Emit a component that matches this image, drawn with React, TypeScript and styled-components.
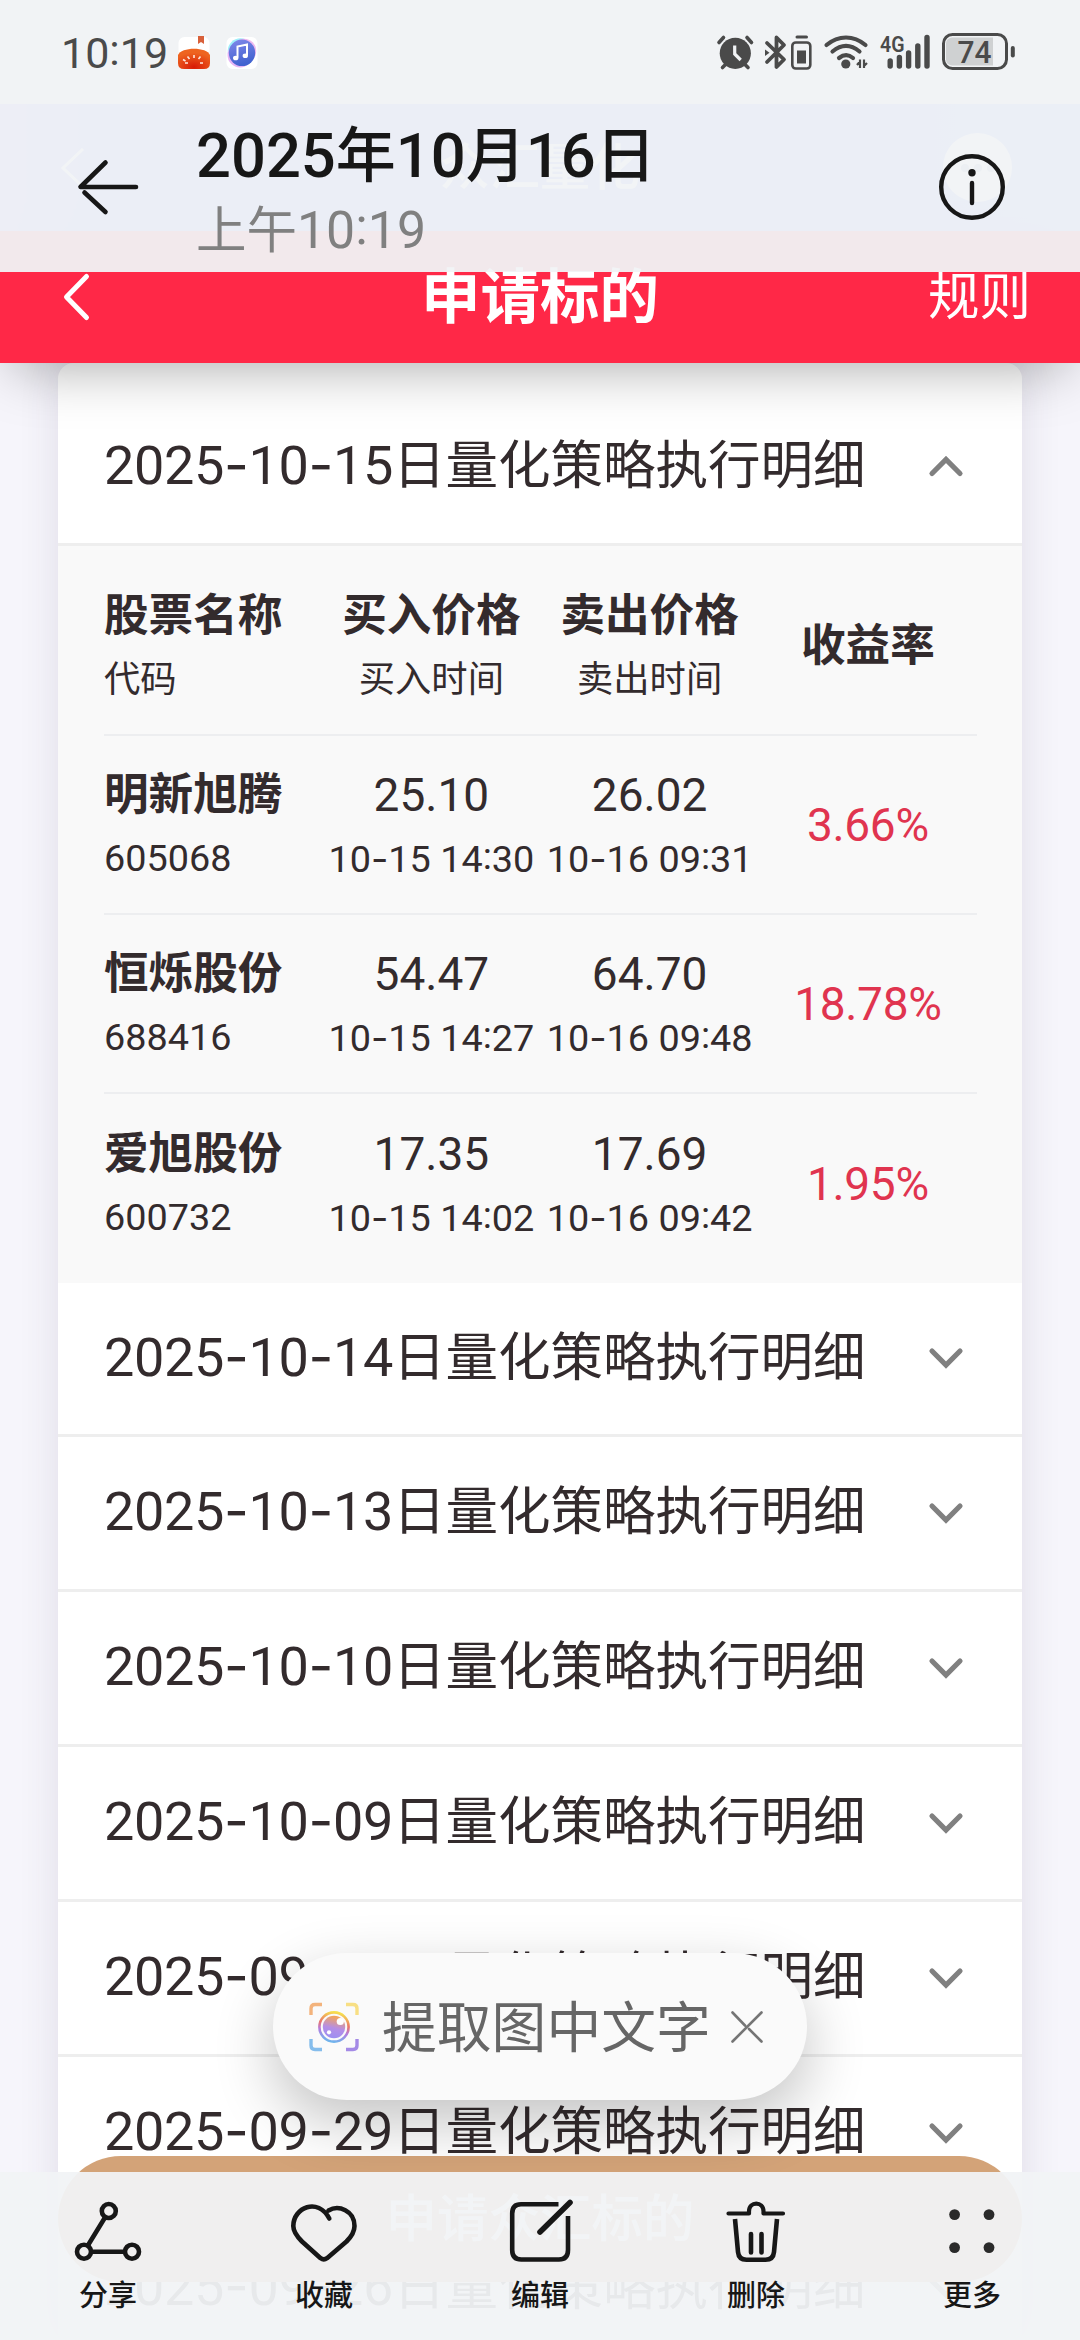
import React from "react";
import styled, { createGlobalStyle } from "styled-components";

const GlobalStyle = createGlobalStyle`
  * { box-sizing: border-box; }
  html, body { margin: 0; padding: 0; }
  body { font-family: Roboto, "Noto Sans CJK SC", sans-serif; background: #f6f5fb; }
  svg { display: block; flex: none; overflow: visible; }
`;

const Screen = styled.div`
  position: relative;
  width: 1080px;
  height: 2340px;
  overflow: hidden;
  background: #f6f5fb;
  color: #332b2d;
`;

/* ---------- text helpers ---------- */

const Digits = styled.span<{ $size: number; $gap?: number }>`
  font-family: Roboto, sans-serif;
  font-size: ${(p) => p.$size}px;
  letter-spacing: ${(p) => p.$gap ?? 0}px;
`;
const Hyphen = styled.span`
  font-family: Inter, sans-serif;
`;
const Colon = styled.span`
  position: relative;
  top: -0.08em;
`;

function Num({ text, size, gap }: { text: string; size: number; gap?: number }) {
  return (
    <Digits $size={size} $gap={gap}>
      {text.split(/([-:])/).map((part, i) =>
        part === "-" ? <Hyphen key={i}>-</Hyphen> : part === ":" ? <Colon key={i}>:</Colon> : part
      )}
    </Digits>
  );
}

/* ---------- captured page ---------- */

const WebView = styled.div`
  display: flex;
  flex-direction: column;
  padding-top: 104px;
  isolation: isolate;
`;
const WebTitleBar = styled.div`
  flex: none;
  height: 127px;
  display: grid;
  grid-template-columns: 200px 1fr 200px;
  align-items: center;
  padding: 0 68px 0 62px;
  background: linear-gradient(90deg, #9c84ff 0, #788fff 100px, #788fff 860px, #7c98ff 100%);
  color: #fff;
`;
const WebTitle = styled.div`
  font-size: 50px;
  line-height: 60px;
  font-weight: 500;
  text-align: center;
  padding-left: 6px;
`;
const MoreBubble = styled.div`
  justify-self: end;
  width: 69px;
  height: 69px;
  border-radius: 50%;
  background: #fff;
  display: flex;
  gap: 5px;
  align-items: center;
  justify-content: center;
`;
const BubbleDot = styled.i`
  width: 8px;
  height: 8px;
  border-radius: 50%;
  background: #8898b8;
`;

const AppHeader = styled.header`
  position: relative;
  z-index: 1;
  flex: none;
  height: 131.5px;
  padding: 0 49px 0 64px;
  display: grid;
  grid-template-columns: 150px 1fr 150px;
  align-items: center;
  background: #ff2847;
  color: #fff;
  box-shadow: 0 18px 56px -14px rgba(0, 0, 0, 0.34);
`;
const AppTitle = styled.h1`
  margin: 2px 0 0;
  font-size: 59.5px;
  line-height: 70px;
  font-weight: 700;
  text-align: center;
  padding-right: 15px;
`;
const RuleLink = styled.a`
  justify-self: end;
  margin-top: 2px;
  font-size: 51.5px;
  line-height: 62px;
`;

const Card = styled.main`
  height: 1977.5px;
  overflow: hidden;
  border-radius: 16px 16px 0 0;
  background: #fff;
`;
const CardShade = styled.div`
  margin: 0 58px;
  border-radius: 16px 16px 0 0;
  box-shadow: 0 0 40px rgba(60, 50, 90, 0.12);
`;
const AccordionRow = styled.div<{ $height: number; $top?: number }>`
  height: ${(p) => p.$height}px;
  padding: ${(p) => p.$top ?? 0}px 59px 0 46px;
  display: flex;
  align-items: center;
  justify-content: space-between;
  border-bottom: 3px solid #eeeeee;
`;
const RowTitle = styled.div`
  margin-bottom: 3px;
  font-size: 52.5px;
  line-height: 64px;
  white-space: nowrap;
`;
const DetailPanel = styled.section`
  height: 737px;
  padding: 11px 45px 0 46px;
  background: #f9f9f9;
`;
const TableRow = styled.div`
  height: 179px;
  display: grid;
  grid-template-columns: repeat(4, 1fr);
  align-items: center;
  border-bottom: 2px solid #edeef0;
  &:last-child { border-bottom: 0; }
`;
const Cell = styled.div<{ $align?: string }>`
  display: flex;
  flex-direction: column;
  align-items: ${(p) => p.$align ?? "center"};
  white-space: nowrap;
`;
const PairCell = styled(Cell)`
  padding-top: 4px;
`;
const Primary = styled.div<{ $bold?: boolean; $color?: string }>`
  height: 64px;
  line-height: 64px;
  font-size: 44.6px;
  font-weight: ${(p) => (p.$bold ? 700 : 400)};
  color: ${(p) => p.$color ?? "inherit"};
`;
const Secondary = styled.div`
  height: 63px;
  line-height: 63px;
  font-size: 36.3px;
`;

/* ---------- overlays ---------- */

const ApplyButton = styled.button`
  position: absolute;
  left: 58px;
  top: 2156px;
  width: 964px;
  height: 126px;
  padding: 0 0 8px;
  border: 0;
  border-radius: 63px;
  background: #d3a378;
  color: #fff;
  font: 500 51.5px/60px "Noto Sans CJK SC", sans-serif;
`;
const StatusBar = styled.div`
  position: absolute;
  inset: 0 0 auto 0;
  height: 104px;
  padding: 0 63px 0 61px;
  display: flex;
  align-items: center;
  background: #f1f3f5;
  color: #4a4a4a;
`;
const Clock = styled.div`
  width: 117px;
  line-height: 50px;
  padding-top: 12px;
  margin-bottom: 0;
`;
const StatusIcons = styled.div`
  margin-left: auto;
`;
const AppIcons = styled.div`
  display: flex;
  gap: 16px;
`;
const GalleryHeader = styled.div`
  position: absolute;
  inset: 104px 0 auto 0;
  height: 168px;
  padding: 0 74px 0 78px;
  display: flex;
  background: rgba(241, 243, 245, 0.95);
`;
const BackSlot = styled.div`
  width: 118px;
  padding-top: 55px;
`;
const DateBlock = styled.div`
  flex: 1;
  white-space: nowrap;
`;
const DateLine = styled.div`
  height: 66px;
  margin-top: 19px;
  line-height: 66px;
  font-size: 60px;
  font-weight: 500;
  color: #171717;
`;
const TimeLine = styled.div`
  height: 60px;
  margin-top: 12px;
  line-height: 60px;
  font-size: 50.5px;
  color: #808080;
`;
const InfoSlot = styled.div`
  padding-top: 49px;
`;
const ExtractPill = styled.div`
  position: absolute;
  left: 273px;
  top: 1953px;
  width: 534px;
  height: 147px;
  padding: 0 44px 0 36px;
  border-radius: 74px;
  display: flex;
  align-items: center;
  background: #fafafa;
  color: #666;
  box-shadow: 0 22px 60px rgba(0, 0, 0, 0.24);
`;
const PillText = styled.div`
  margin: 3px auto 0 23px;
  font-size: 54.8px;
  line-height: 70px;
  white-space: nowrap;
`;
const Toolbar = styled.nav`
  position: absolute;
  inset: 2172px 0 0 0;
  display: grid;
  grid-template-columns: repeat(5, 1fr);
  background: rgba(241, 243, 245, 0.95);
`;
const Tool = styled.div`
  display: flex;
  flex-direction: column;
  align-items: center;
  padding-top: 26px;
  font-size: 29px;
  line-height: 36px;
  font-weight: 500;
  color: #171717;
`;
const ToolIcon = styled.svg`
  width: 72px;
  height: 72px;
  margin-bottom: 8px;
  fill: none;
  stroke: #171717;
  stroke-width: 4.6;
  stroke-linecap: round;
  stroke-linejoin: round;
`;

function Chevron({ up }: { up?: boolean }) {
  return (
    <svg width="34" height="21" viewBox="0 0 34 21" fill="none" stroke="#808080" strokeWidth="5.2" strokeLinecap="round">
      <path d={up ? "M3 17.5 17 3.5 31 17.5" : "M3 3 17 17 31 3"} />
    </svg>
  );
}

function StatusGlyphs() {
  const c = "#4a4a4a";
  return (
    <svg width="300" height="38" viewBox="717 33 300 38" fill="none" stroke={c} strokeLinecap="round">
      <circle cx="735.3" cy="53.3" r="15.6" fill={c} stroke="none" />
      <path d="M734.7 45.5v8.5l6 6" stroke="#f1f3f5" strokeWidth="3.2" strokeLinecap="butt" />
      <path d="M719 42.5l4.5-5M751.5 42.5l-4.5-5M722.5 67.5l4-4M748 67.5l-4-4" strokeWidth="3.6" />
      <path d="M767 43l17 16.500l-7.500 7.500V37.500l7.500 7.500L767 62" strokeWidth="3.8" strokeLinejoin="round" />
      <path d="M765 49.500l4.500 3.300-4.500 3.300z" fill={c} stroke="none" />
      <path d="M797 37h9.500" strokeWidth="3" />
      <rect x="792.300" y="42.500" width="18" height="26" rx="3.500" strokeWidth="2.600" />
      <rect x="797" y="50.500" width="9" height="13" fill={c} stroke="none" />
      <path d="M826.500 45c12-10 27-10 39 0M832.500 51.500c9-7.500 18-7.500 27 0M839 58c5-4 9.500-4 14 0" strokeWidth="4.200" />
      <circle cx="845.800" cy="64" r="4.600" fill={c} stroke="none" />
      <path d="M860 59.500v8.500M857 65l3-3.500M864 59.500v8.500M864 66l3-3" strokeWidth="2.200" strokeLinecap="butt" />
      <text x="880" y="51.500" fill={c} stroke="none" fontFamily="Roboto, sans-serif" fontWeight="600" fontSize="22" textLength="24.500" lengthAdjust="spacingAndGlyphs">4G</text>
      <path d="M890.200 61v5M899.400 57.500v8.500M908.600 53v13M917.800 46v20M927 37.500V66" strokeWidth="5.400" />
      <rect x="943.500" y="34.500" width="63" height="34" rx="9" strokeWidth="3" />
      <path d="M952 37.500h41v28h-41q-6-1-6-6v-16q0-5 6-6z" fill="#cfd1d2" stroke="none" />
      <path d="M1012.800 48v7.500" strokeWidth="4" />
      <text x="957.500" y="63" fill={c} stroke="none" fontFamily="Roboto, sans-serif" fontWeight="500" fontSize="32" textLength="34" lengthAdjust="spacingAndGlyphs">74</text>
    </svg>
  );
}

function BerryIcon() {
  return (
    <svg width="32" height="33" viewBox="0 0 32 33">
      <defs>
        <radialGradient id="berry" cx="0.5" cy="0.9" r="0.7">
          <stop offset="0" stopColor="#d81a06" />
          <stop offset="1" stopColor="#ee6420" />
        </radialGradient>
      </defs>
      <rect x="0.500" y="1" width="31" height="32" rx="6" fill="#fff" />
      <path d="M20 0h6v8l-3-2-3 2z" fill="#d8603a" />
      <path d="M0 19c3-8.500 29-8.500 32 0v8q0 6-6 6H6q-6 0-6-6z" fill="url(#berry)" />
      <path d="M16 19v3M9.500 20.500l2 2.500M22.500 20.500l-2 2.500M7 27h3M22 27h3M5 23.500l2.500 1.500" stroke="#ffe9dc" strokeWidth="1.600" />
    </svg>
  );
}

function MusicIcon() {
  return (
    <svg width="32" height="33" viewBox="0 0 32 33">
      <defs>
        <linearGradient id="music" x1="0" y1="0" x2="0.300" y2="1">
          <stop offset="0" stopColor="#8189ea" />
          <stop offset="1" stopColor="#4263d0" />
        </linearGradient>
      </defs>
      <rect x="0.500" y="1" width="31" height="32" rx="6" fill="#fff" />
      <circle cx="14.500" cy="15" r="12.800" fill="#9ff0fa" />
      <circle cx="14" cy="19" r="12.500" fill="#e6b4f5" />
      <circle cx="18" cy="15" r="12.300" fill="#f0b9ef" />
      <circle cx="16" cy="16.800" r="13.200" fill="url(#music)" />
      <path d="M11.500 21.500V10.500l9.500-2v10.500" fill="none" stroke="#fff" strokeWidth="2" />
      <ellipse cx="9.700" cy="22" rx="2.700" ry="2.300" fill="#fff" />
      <ellipse cx="19.300" cy="19.800" rx="2.700" ry="2.300" fill="#fff" />
    </svg>
  );
}

function LensIcon() {
  return (
    <svg width="50" height="50" viewBox="0 0 50 50" fill="none">
      <defs>
        <linearGradient id="lens" x1="0.600" y1="0" x2="0.400" y2="1">
          <stop offset="0.050" stopColor="#f3a45c" />
          <stop offset="0.550" stopColor="#b58ee6" />
          <stop offset="1" stopColor="#9c8ef2" />
        </linearGradient>
        <linearGradient id="ring" x1="0.600" y1="0" x2="0.400" y2="1">
          <stop offset="0" stopColor="#f6e04e" />
          <stop offset="0.400" stopColor="#ea7668" />
          <stop offset="0.650" stopColor="#b47ce0" />
          <stop offset="1" stopColor="#6fb4ec" />
        </linearGradient>
      </defs>
      <path d="M2 13V6.500q0-4 4-4h7" stroke="#f3b37c" strokeWidth="3.400" />
      <path d="M37 2.500h7q4 0 4 4V13" stroke="#f8df84" strokeWidth="3.400" />
      <path d="M2 37v6.500q0 4 4 4h7" stroke="#85bdec" strokeWidth="3.400" />
      <path d="M37 47.500h7q4 0 4-4V37" stroke="#a48ae6" strokeWidth="3.400" />
      <circle cx="25" cy="25" r="14.600" stroke="url(#ring)" strokeWidth="2.600" />
      <circle cx="25" cy="25" r="11.200" fill="url(#lens)" />
      <circle cx="31.300" cy="19.500" r="3.600" fill="#fff" />
      <circle cx="20" cy="30.300" r="2.100" fill="#fff" />
    </svg>
  );
}

const trades = [
  { name: "明新旭腾", code: "605068", buy: "25.10", buyAt: "10-15 14:30", sell: "26.02", sellAt: "10-16 09:31", rate: "3.66%" },
  { name: "恒烁股份", code: "688416", buy: "54.47", buyAt: "10-15 14:27", sell: "64.70", sellAt: "10-16 09:48", rate: "18.78%" },
  { name: "爱旭股份", code: "600732", buy: "17.35", buyAt: "10-15 14:02", sell: "17.69", sellAt: "10-16 09:42", rate: "1.95%" },
];

const closedDays = ["2025-10-14", "2025-10-13", "2025-10-10", "2025-10-09", "2025-09-30", "2025-09-29", "2025-09-26"];

function DayTitle({ date }: { date: string }) {
  return (
    <RowTitle>
      <Num text={date} size={54} gap={-0.35} />
      日量化策略执行明细
    </RowTitle>
  );
}

export default function App() {
  return (
    <Screen>
      <GlobalStyle />
      <WebView>
        <WebTitleBar>
          <svg width="22" height="40" viewBox="0 0 22 40" fill="none" stroke="#fff" strokeWidth="3">
            <path d="M21 1 1 20l20 19" />
          </svg>
          <WebTitle>众汇量化</WebTitle>
          <MoreBubble>
            <BubbleDot />
            <BubbleDot />
            <BubbleDot />
          </MoreBubble>
        </WebTitleBar>
        <AppHeader>
          <svg width="25" height="46" viewBox="0 0 25 46" fill="none" stroke="#fff" strokeWidth="5" strokeLinecap="round" strokeLinejoin="round">
            <path d="M22.500 2.500 2.500 23l20 20.500" />
          </svg>
          <AppTitle>申请标的</AppTitle>
          <RuleLink>规则</RuleLink>
        </AppHeader>
        <CardShade>
          <Card>
            <AccordionRow $height={183.5} $top={28}>
              <DayTitle date="2025-10-15" />
              <Chevron up />
            </AccordionRow>
            <DetailPanel>
              <TableRow>
                <PairCell $align="flex-start">
                  <Primary $bold>股票名称</Primary>
                  <Secondary>代码</Secondary>
                </PairCell>
                <PairCell>
                  <Primary $bold>买入价格</Primary>
                  <Secondary>买入时间</Secondary>
                </PairCell>
                <PairCell>
                  <Primary $bold>卖出价格</Primary>
                  <Secondary>卖出时间</Secondary>
                </PairCell>
                <Cell>
                  <Primary $bold>收益率</Primary>
                </Cell>
              </TableRow>
              {trades.map((t) => (
                <TableRow key={t.code}>
                  <PairCell $align="flex-start">
                    <Primary $bold>{t.name}</Primary>
                    <Secondary><Num text={t.code} size={37.8} /></Secondary>
                  </PairCell>
                  <PairCell>
                    <Primary><Num text={t.buy} size={46} /></Primary>
                    <Secondary><Num text={t.buyAt} size={37.8} /></Secondary>
                  </PairCell>
                  <PairCell>
                    <Primary><Num text={t.sell} size={46} /></Primary>
                    <Secondary><Num text={t.sellAt} size={37.8} /></Secondary>
                  </PairCell>
                  <Cell>
                    <Primary $color="#e0344f"><Num text={t.rate} size={46} gap={-0.3} /></Primary>
                  </Cell>
                </TableRow>
              ))}
            </DetailPanel>
            {closedDays.map((d, i) => (
              <AccordionRow key={d} $height={i === 0 ? 154 : 155}>
                <DayTitle date={d} />
                <Chevron />
              </AccordionRow>
            ))}
          </Card>
        </CardShade>
      </WebView>

      <ApplyButton>申请众汇标的</ApplyButton>

      <StatusBar>
        <Clock><Num text="10:19" size={43} /></Clock>
        <AppIcons>
          <BerryIcon />
          <MusicIcon />
        </AppIcons>
        <StatusIcons><StatusGlyphs /></StatusIcons>
      </StatusBar>

      <GalleryHeader>
        <BackSlot>
          <svg width="60" height="56" viewBox="78 159 60 56" fill="none" stroke="#171717" strokeWidth="4.600" strokeLinecap="round">
            <path d="M105.500 162.500 80.500 187H136" strokeLinejoin="round" />
            <path d="M84.500 192.500l21 19.500" />
          </svg>
        </BackSlot>
        <DateBlock>
          <DateLine>
            <Num text="2025" size={61.5} />年<Num text="10" size={61.5} />月<Num text="16" size={61.5} />日
          </DateLine>
          <TimeLine>上午<Num text="10:19" size={51.8} /></TimeLine>
        </DateBlock>
        <InfoSlot>
          <svg width="68" height="68" viewBox="0 0 68 68" fill="none" stroke="#171717" strokeWidth="4.400" strokeLinecap="round">
            <circle cx="34" cy="34" r="30.800" />
            <path d="M34 30v20" />
            <circle cx="34" cy="19.700" r="3.700" fill="#171717" stroke="none" />
          </svg>
        </InfoSlot>
      </GalleryHeader>

      <ExtractPill>
        <LensIcon />
        <PillText>提取图中文字</PillText>
        <svg width="32" height="32" viewBox="0 0 32 32" fill="none" stroke="#757575" strokeWidth="2.600" strokeLinecap="round">
          <path d="M1.500 1.500l12.500 13M30.500 1.500l-29 29M18 18l12.500 12.500" />
        </svg>
      </ExtractPill>

      <Toolbar>
        <Tool>
          <ToolIcon viewBox="0 0 72 72">
            <circle cx="36.800" cy="13" r="7" />
            <circle cx="12" cy="53.700" r="7" />
            <circle cx="60" cy="53.700" r="7" />
            <path d="M33 19.500 16 47.200M19.500 53.700h33" />
          </ToolIcon>
          分享
        </Tool>
        <Tool>
          <ToolIcon viewBox="0 0 72 72">
            <path d="M40.500 12.500c10-6 26 0 26 15.500 0 6-3 10.500-8 15.500L39 60.200q-3.200 2.300-6.400 0L14 43.500C9 38.500 5.300 34 5.300 28 5.300 9.500 30-1 41.300 20.500" />
          </ToolIcon>
          收藏
        </Tool>
        <Tool>
          <ToolIcon viewBox="0 0 72 72">
            <path d="M54.500 6.300H17Q8.200 6.300 8.200 15.500V52q0 9.500 9 9.500H55q9 0 9-9.500V18" strokeLinecap="butt" />
            <path d="M36 34 66 4.500" strokeWidth="5.600" />
          </ToolIcon>
          编辑
        </Tool>
        <Tool>
          <ToolIcon viewBox="0 0 72 72">
            <path d="M8.500 15.500H29v-2.200C29 3 43.500 3 43.500 13.300v2.200H63" strokeWidth="4.200" />
            <path d="M15 21l3 33q.7 7.700 8.500 7.700h19q7.800 0 8.500-7.700l3-33" strokeLinecap="butt" />
            <path d="M31 36v18.500M41.500 36v18.500" />
          </ToolIcon>
          删除
        </Tool>
        <Tool>
          <ToolIcon viewBox="0 0 72 72">
            <g fill="#2a2a2a" stroke="none">
              <circle cx="18.600" cy="16.600" r="5.400" />
              <circle cx="53" cy="16.600" r="5.400" />
              <circle cx="18.600" cy="49.600" r="5.400" />
              <circle cx="53" cy="49.600" r="5.400" />
            </g>
          </ToolIcon>
          更多
        </Tool>
      </Toolbar>
    </Screen>
  );
}
